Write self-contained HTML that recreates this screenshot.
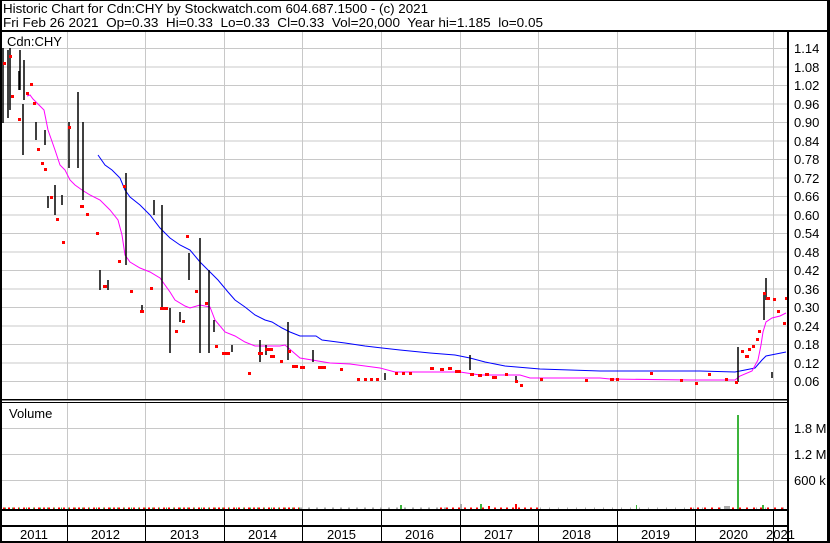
<!DOCTYPE html>
<html><head><meta charset="utf-8"><style>
html,body{margin:0;padding:0;background:#fff;}
svg{display:block;font-family:"Liberation Sans",Arial,sans-serif;}
.d rect{height:3px;}
</style></head><body>
<svg width="830" height="543" viewBox="0 0 830 543" xmlns="http://www.w3.org/2000/svg">
<rect width="830" height="543" fill="#fff"/>
<!-- header -->
<text x="3" y="13" font-size="13" textLength="425" lengthAdjust="spacingAndGlyphs">Historic Chart for Cdn:CHY by Stockwatch.com 604.687.1500 - (c) 2021</text>
<text x="3" y="27" font-size="13" textLength="540" lengthAdjust="spacingAndGlyphs" style="white-space:pre">Fri Feb 26 2021  Op=0.33  Hi=0.33  Lo=0.33  Cl=0.33  Vol=20,000  Year hi=1.185  lo=0.05</text>
<!-- grid price -->
<g stroke="#c8c8c8" stroke-width="1">
<path d="M67.5 32V400M145.5 32V400M224.5 32V400M302.5 32V400M381.5 32V400M460.5 32V400M538.5 32V400M617.5 32V400M695.5 32V400M773.5 32V400"/>
<path d="M2 48.5H789M2 67H789M2 85.5H789M2 104H789M2 122.5H789M2 141H789M2 159.5H789M2 178H789M2 196.5H789M2 215H789M2 233.5H789M2 252H789M2 270.5H789M2 289H789M2 307.5H789M2 326H789M2 344.5H789M2 363H789M2 381.5H789"/>
<path d="M67.5 403V509M145.5 403V509M224.5 403V509M302.5 403V509M381.5 403V509M460.5 403V509M538.5 403V509M617.5 403V509M695.5 403V509M773.5 403V509"/>
<path d="M2 428.5H789M2 454.5H789M2 480.5H789"/>
</g>
<text x="7" y="46" font-size="13">Cdn:CHY</text>
<text x="9" y="418" font-size="13">Volume</text>
<!-- axis labels -->
<g font-size="13" fill="#000">
<text x="794" y="53">1.14</text><text x="794" y="72">1.08</text><text x="794" y="90">1.02</text><text x="794" y="109">0.96</text><text x="794" y="127">0.90</text><text x="794" y="146">0.84</text><text x="794" y="164">0.78</text><text x="794" y="183">0.72</text><text x="794" y="201">0.66</text><text x="794" y="220">0.60</text><text x="794" y="238">0.54</text><text x="794" y="257">0.48</text><text x="794" y="275">0.42</text><text x="794" y="294">0.36</text><text x="794" y="312">0.30</text><text x="794" y="331">0.24</text><text x="794" y="349">0.18</text><text x="794" y="368">0.12</text><text x="794" y="386">0.06</text>
<text x="794" y="433">1.8 M</text><text x="794" y="459">1.2 M</text><text x="794" y="485">600 k</text>
<text x="20" y="539">2011</text><text x="91" y="539">2012</text><text x="170" y="539">2013</text><text x="248" y="539">2014</text><text x="327" y="539">2015</text><text x="405" y="539">2016</text><text x="484" y="539">2017</text><text x="562" y="539">2018</text><text x="641" y="539">2019</text><text x="719" y="539">2020</text><text x="766" y="539">2021</text>
</g>
<!-- MAs -->
<polyline fill="none" stroke="#0000ff" stroke-width="1" points="98,155 105,165 112,170 120,178 125,190 130,197 140,205 150,215 160,228 170,238 180,245 190,250 200,262 210,272 218,280 228,292 235,300 245,307 255,315 265,320 272,322 282,328 290,332 300,336 316,336 322,340 345,343 365,346 400,350 430,353 455,355 470,358 485,362 505,366 540,369 600,371 700,371 735,372 755,368 762,360 766,356 776,354 786,352"/>
<polyline fill="none" stroke="#ff00ff" stroke-width="1" points="27,96 30,95 33,99 40,106 44,110 46,120 48,130 55,150 60,165 65,170 70,180 75,185 82,190 90,195 100,200 110,210 118,220 122,235 125,255 130,262 140,268 150,272 160,278 165,285 170,292 175,300 185,306 190,308 200,305 210,307 215,320 225,332 235,336 245,342 255,346 280,346 285,345 300,358 330,363 350,364 380,368 395,372 460,372 480,375 520,375 530,378 600,378 610,379 690,380 735,380 740,376 752,371 758,360 761,345 763,332 766,322 772,318 780,316 786,313"/>
<!-- black hi-lo bars -->
<g stroke="#000" stroke-width="1.5">
<path d="M3 48V123M8 50V118M10 48V110M19 71V90M23 104V155M36 122V140M55 185V215M69 122V168M78 92V168M83 122V200M100 270V290M126 173V265M154 200V215M162 205V308M170 308V353M189 253V280M200 238V353M209 270V353M260 340V362M288 322V360M313 350V362M385 373V380M470 355V370M516 376V382M738 347V382M764 295V320M766 278V300M772 372V378"/>
<path d="M20 50V90M24 60V100M45 130V145M62 195V205M48 196V208M108 280V290M142 305V312M180 312V322M214 320V332M232 345V352M266 345V355"/>
</g>
<!-- red close dots -->
<g fill="#ff0000" class="d">
<rect x="3" y="62" width="3" height="3"/><rect x="9" y="55" width="3" height="3"/><rect x="11" y="95" width="3" height="3"/><rect x="18" y="118" width="3" height="3"/><rect x="26" y="92" width="3" height="3"/><rect x="30" y="83" width="3" height="3"/><rect x="33" y="102" width="3" height="3"/><rect x="37" y="148" width="3" height="3"/><rect x="41" y="162" width="3" height="3"/><rect x="44" y="168" width="3" height="3"/><rect x="50" y="196" width="3" height="3"/><rect x="56" y="218" width="3" height="3"/><rect x="62" y="241" width="3" height="3"/><rect x="68" y="126" width="3" height="3"/><rect x="80" y="205" width="4" height="3"/><rect x="86" y="213" width="3" height="3"/><rect x="96" y="232" width="3" height="3"/><rect x="103" y="285" width="4" height="3"/><rect x="118" y="260" width="3" height="3"/><rect x="123" y="185" width="3" height="3"/><rect x="130" y="290" width="3" height="3"/><rect x="140" y="310" width="4" height="3"/><rect x="150" y="287" width="3" height="3"/><rect x="160" y="307" width="8" height="3"/><rect x="175" y="330" width="3" height="3"/><rect x="182" y="320" width="3" height="3"/><rect x="186" y="235" width="3" height="3"/><rect x="195" y="290" width="3" height="3"/><rect x="205" y="302" width="3" height="3"/><rect x="215" y="345" width="3" height="3"/><rect x="222" y="352" width="8" height="3"/><rect x="248" y="372" width="3" height="3"/><rect x="258" y="352" width="5" height="3"/><rect x="265" y="348" width="8" height="3"/><rect x="270" y="355" width="5" height="3"/><rect x="280" y="360" width="3" height="3"/><rect x="288" y="350" width="3" height="3"/><rect x="292" y="365" width="6" height="3"/><rect x="300" y="366" width="5" height="3"/><rect x="318" y="366" width="8" height="3"/><rect x="340" y="368" width="3" height="3"/><rect x="357" y="378" width="3" height="3"/><rect x="364" y="378" width="3" height="3"/><rect x="370" y="378" width="3" height="3"/><rect x="376" y="378" width="3" height="3"/><rect x="395" y="372" width="3" height="3"/><rect x="402" y="372" width="3" height="3"/><rect x="409" y="372" width="3" height="3"/><rect x="430" y="367" width="4" height="3"/><rect x="440" y="368" width="4" height="3"/><rect x="448" y="367" width="4" height="3"/><rect x="455" y="370" width="6" height="3"/><rect x="470" y="373" width="4" height="3"/><rect x="478" y="374" width="4" height="3"/><rect x="485" y="373" width="4" height="3"/><rect x="492" y="376" width="5" height="3"/><rect x="505" y="373" width="3" height="3"/><rect x="515" y="380" width="3" height="3"/><rect x="520" y="384" width="3" height="3"/><rect x="540" y="378" width="3" height="3"/><rect x="585" y="379" width="3" height="3"/><rect x="610" y="378" width="4" height="3"/><rect x="616" y="378" width="3" height="3"/><rect x="650" y="372" width="3" height="3"/><rect x="680" y="379" width="3" height="3"/><rect x="695" y="382" width="3" height="3"/><rect x="708" y="373" width="3" height="3"/><rect x="725" y="378" width="3" height="3"/><rect x="735" y="381" width="3" height="3"/><rect x="741" y="350" width="3" height="3"/><rect x="745" y="355" width="4" height="3"/><rect x="748" y="348" width="3" height="3"/><rect x="752" y="345" width="3" height="3"/><rect x="756" y="338" width="3" height="3"/><rect x="758" y="330" width="3" height="3"/><rect x="763" y="292" width="3" height="3"/><rect x="766" y="297" width="4" height="3"/><rect x="773" y="298" width="3" height="3"/><rect x="777" y="310" width="3" height="3"/><rect x="783" y="322" width="3" height="3"/><rect x="785" y="297" width="3" height="3"/>
</g>
<!-- volume -->
<g stroke-width="2" fill="none">
<path d="M3 508.5H300" stroke="#ff0000" stroke-dasharray="2 3"/>
<path d="M5 508.5H300" stroke="#3cb43c" stroke-dasharray="1 6"/>
<path d="M300 508.5H460" stroke="#aaaaaa" stroke-dasharray="2 6"/>
<path d="M440 508.5H540" stroke="#ff0000" stroke-dasharray="2 4"/>
<path d="M540 508.5H787" stroke="#aaaaaa" stroke-dasharray="1 8"/>
<path d="M690 508.5H787" stroke="#ff0000" stroke-dasharray="2 5"/>
</g>
<g fill="#3cb43c"><rect x="737" y="415" width="2" height="94"/><rect x="480" y="504" width="2" height="5"/><rect x="762" y="505" width="2" height="4"/><rect x="636" y="505" width="1" height="4"/><rect x="400" y="505" width="2" height="4"/></g>
<g fill="#ff0000"><rect x="515" y="504" width="2" height="5"/><rect x="488" y="506" width="2" height="3"/></g>
<g fill="#aaaaaa"><rect x="460" y="504" width="2" height="5"/><rect x="724" y="506" width="6" height="3"/></g>
<!-- frame -->
<g fill="#000">
<rect x="0" y="0" width="830" height="1"/>
<rect x="0" y="0" width="2" height="543"/>
<rect x="0" y="30" width="830" height="2"/>
<rect x="787" y="30" width="2" height="513"/>
<rect x="827" y="0" width="3" height="543"/>
<rect x="2" y="399" width="787" height="1.5"/>
<rect x="2" y="402" width="787" height="1"/>
<rect x="2" y="509" width="787" height="2"/>
<rect x="2" y="525" width="787" height="2"/>
<rect x="0" y="541" width="830" height="2"/>
</g>
<g stroke="#000" stroke-width="1"><path d="M67.5 511V541M145.5 511V541M224.5 511V541M302.5 511V541M381.5 511V541M460.5 511V541M538.5 511V541M617.5 511V541M695.5 511V541M773.5 511V541"/></g>
</svg>
</body></html>
